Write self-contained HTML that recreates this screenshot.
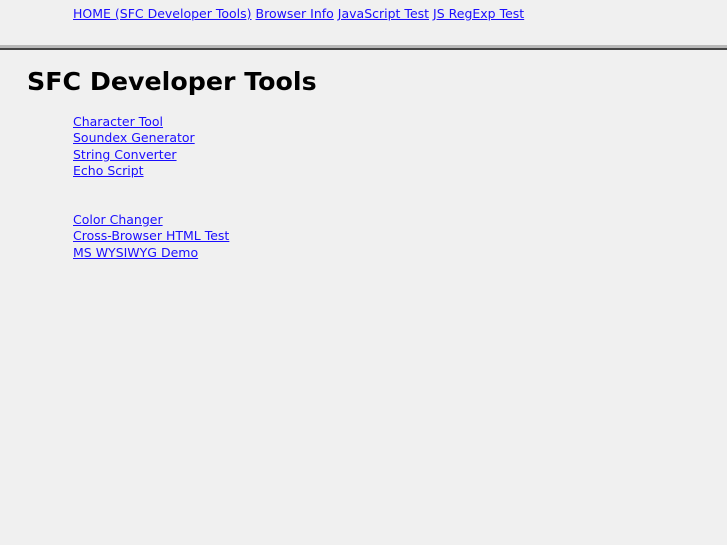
<!DOCTYPE html>
<html><head><style>
body{margin:0;background:#f0f0f0;font-family:"DejaVu Sans",sans-serif;font-size:12.5px;color:#000;}
a{color:#1a0dff;text-decoration:underline;}
.top{position:absolute;left:73px;top:6px;line-height:16px;white-space:nowrap;}
.hr{position:absolute;left:0;top:45px;width:727px;height:3px;background:#b8b8b8;}
.hr2{position:absolute;left:0;top:48px;width:727px;height:2px;background:#444;}
h1{position:absolute;left:27px;top:66px;margin:0;font-size:25.3px;font-weight:bold;line-height:32px;}
.list{position:absolute;left:73px;line-height:16.4px;}
</style></head><body>
<div class="top"><a href="#">HOME (SFC Developer Tools)</a> <a href="#">Browser Info</a> <a href="#">JavaScript Test</a> <a href="#">JS RegExp Test</a></div>
<div class="hr"></div><div class="hr2"></div>
<h1>SFC Developer Tools</h1>
<div class="list" style="top:114px"><a href="#">Character Tool</a><br><a href="#">Soundex Generator</a><br><a href="#">String Converter</a><br><a href="#">Echo Script</a></div>
<div class="list" style="top:212px"><a href="#">Color Changer</a><br><a href="#">Cross-Browser HTML Test</a><br><a href="#">MS WYSIWYG Demo</a></div>
</body></html>
